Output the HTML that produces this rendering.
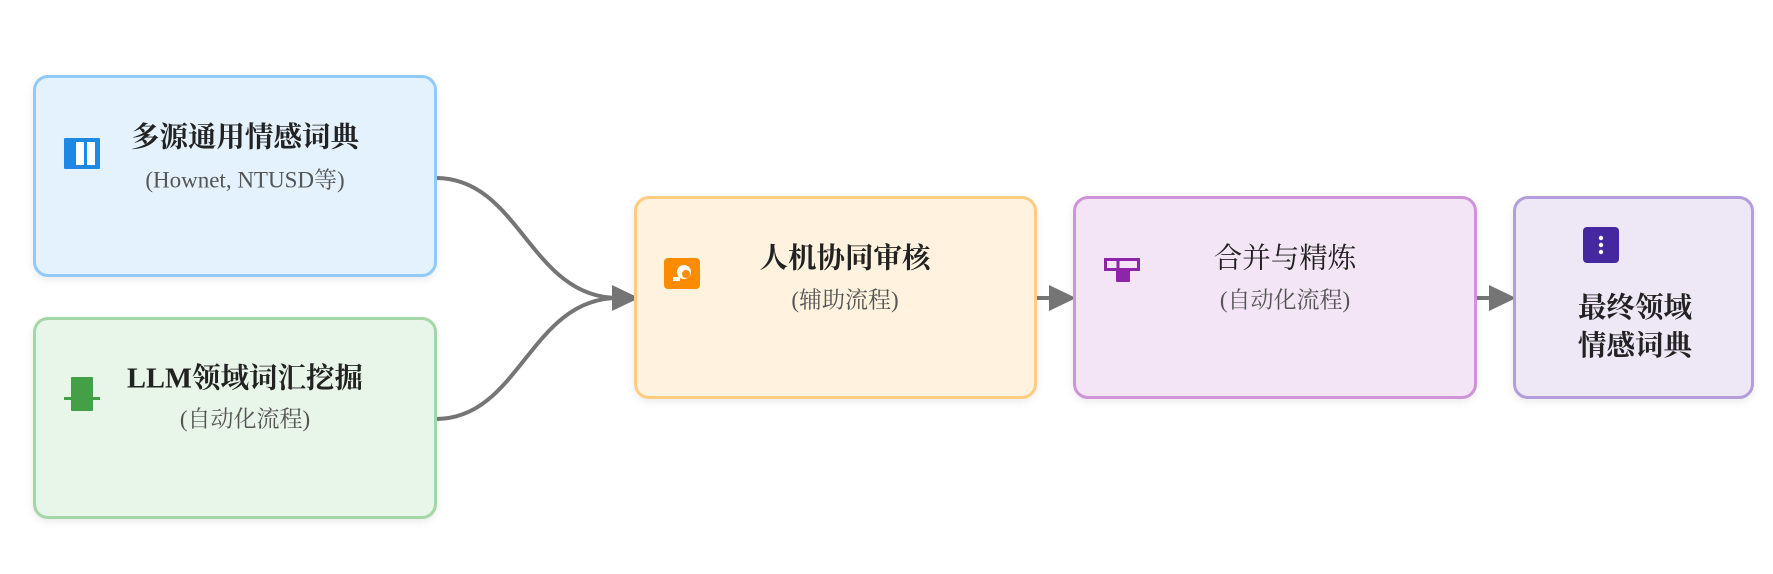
<!DOCTYPE html>
<html><head><meta charset="utf-8"><style>
body{margin:0;width:1773px;height:574px;background:#fff;position:relative;overflow:hidden;font-family:"Liberation Serif","Noto Serif CJK SC",serif}
.b{position:absolute;box-sizing:border-box;border:3px solid;border-radius:15px;box-shadow:0 3px 8px rgba(0,0,0,0.08)}
.t{position:absolute;transform:translate(-50%,-50%);white-space:nowrap;text-align:center}
.h{font-size:28.5px;font-weight:bold;color:#222}
.s{font-size:23px;color:#555}
</style></head><body>
<svg width="1773" height="574" style="position:absolute;left:0;top:0">
<path d="M436 178 C520 178 530 298 618 298" fill="none" stroke="#757575" stroke-width="4"/>
<path d="M436 419 C520 419 530 298 618 298" fill="none" stroke="#757575" stroke-width="4"/>
<polygon points="612,285 639,298 612,311" fill="#757575"/>
<line x1="1036" y1="298" x2="1053" y2="298" stroke="#757575" stroke-width="4"/>
<polygon points="1049,285 1076,298 1049,311" fill="#757575"/>
<line x1="1475" y1="298" x2="1493" y2="298" stroke="#757575" stroke-width="4"/>
<polygon points="1489,285 1516,298 1489,311" fill="#757575"/>
</svg>
<div class="b" style="left:33px;top:75px;width:404px;height:202px;background:#e3f2fd;border-color:#90caf9"></div>
<div class="b" style="left:33px;top:317px;width:404px;height:202px;background:#e8f5e9;border-color:#a5d6a7"></div>
<div class="b" style="left:634px;top:196px;width:403px;height:203px;background:#fff3e0;border-color:#ffcc80"></div>
<div class="b" style="left:1073px;top:196px;width:404px;height:203px;background:#f3e5f5;border-color:#ce93d8"></div>
<div class="b" style="left:1513px;top:196px;width:241px;height:203px;background:#ede7f6;border-color:#b39ddb"></div>
<!-- icons -->
<svg style="position:absolute;left:64px;top:138px" width="36" height="31"><rect width="36" height="31" fill="#1e88e5" rx="1"/><rect x="12" y="4" width="8" height="23" fill="#fff"/><rect x="23" y="4" width="8" height="23" fill="#fff"/></svg>
<svg style="position:absolute;left:64px;top:377px" width="36" height="34"><rect x="7" y="0" width="22" height="34" fill="#43a047" rx="1"/><rect x="0" y="20" width="36" height="3" fill="#43a047"/></svg>
<svg style="position:absolute;left:664px;top:258px" width="36" height="31"><rect width="36" height="31" rx="4" fill="#fb8c00"/><circle cx="20" cy="14" r="7" fill="#fff"/><circle cx="22" cy="16" r="4" fill="#fb8c00"/><rect x="9" y="19" width="7" height="4" fill="#fff"/></svg>
<svg style="position:absolute;left:1104px;top:258px" width="36" height="30"><rect x="1.5" y="1.5" width="33" height="10" fill="none" stroke="#8e24aa" stroke-width="3"/><line x1="14" y1="1" x2="14" y2="12" stroke="#8e24aa" stroke-width="3"/><rect x="12" y="11" width="14" height="13" fill="#8e24aa" rx="1"/></svg>
<svg style="position:absolute;left:1583px;top:227px" width="36" height="36"><rect width="36" height="36" rx="4" fill="#4527a0"/><circle cx="18" cy="11" r="2.2" fill="#fff"/><circle cx="18" cy="18" r="2.2" fill="#fff"/><circle cx="18" cy="25" r="2.2" fill="#fff"/></svg>
<!-- text -->
<div class="t h" style="left:245px;top:135px">多源通用情感词典</div>
<div class="t s" style="left:245px;top:178px">(Hownet, NTUSD等)</div>
<div class="t h" style="left:245px;top:376px">LLM领域词汇挖掘</div>
<div class="t s" style="left:245px;top:417px">(自动化流程)</div>
<div class="t h" style="left:845px;top:256px">人机协同审核</div>
<div class="t s" style="left:845px;top:298px">(辅助流程)</div>
<div class="t h" style="left:1285px;top:256px;font-weight:normal">合并与精炼</div>
<div class="t s" style="left:1285px;top:298px">(自动化流程)</div>
<div class="t h" style="left:1635px;top:328px;line-height:38px">最终领域<br>情感词典</div>
</body></html>
